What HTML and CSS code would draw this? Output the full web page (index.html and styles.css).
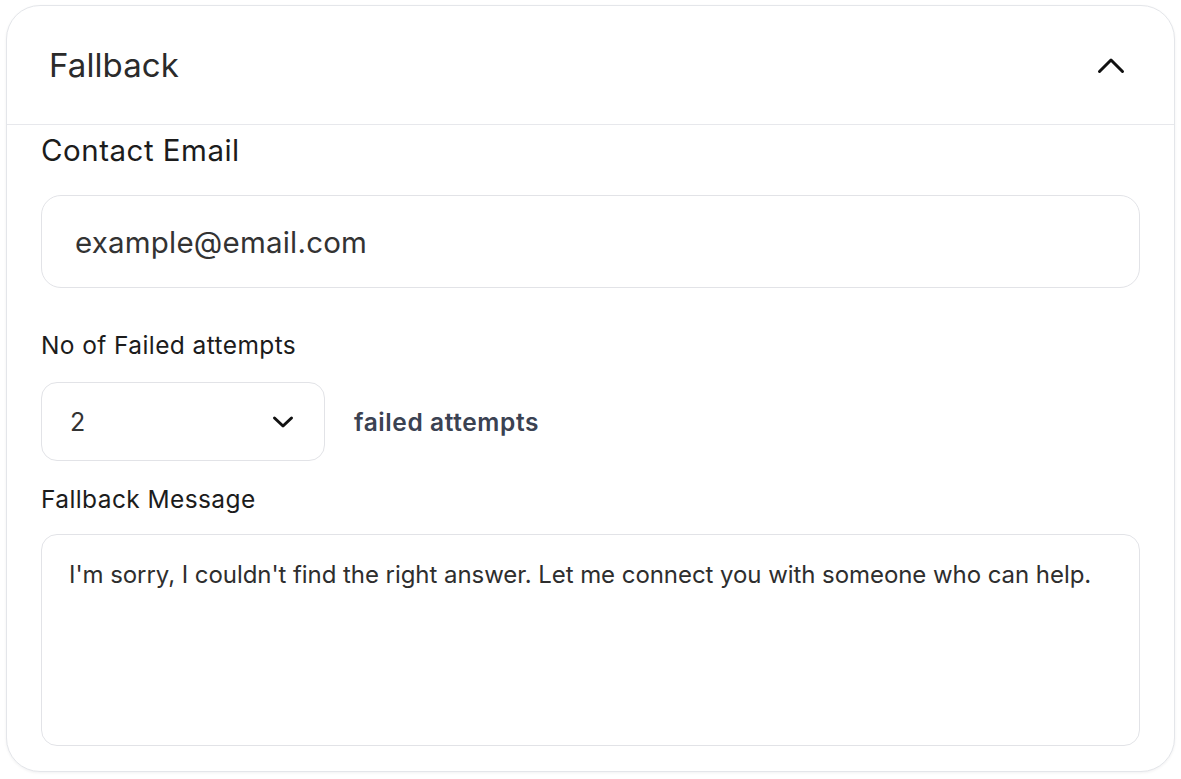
FILE: index.html
```html
<!DOCTYPE html>
<html lang="en">
<head>
<meta charset="utf-8">
<title>Fallback</title>
<link rel="stylesheet" href="styles.css">
</head>
<body>
<section class="card">
  <header class="card-header">
    <h2 class="card-title">Fallback</h2>
    <button class="toggle" type="button" aria-label="Collapse">
      <svg width="28" height="18" viewBox="0 0 28 18"><path d="M2.5 15.5 L14 4 L25.5 15.5" fill="none" stroke="#111" stroke-width="3" stroke-linecap="round" stroke-linejoin="round"/></svg>
    </button>
  </header>
  <div class="card-body">
    <label class="label-lg">Contact Email</label>
    <input class="field field-email" type="text" value="example@email.com">

    <label class="label">No of Failed attempts</label>
    <div class="attempts-row">
      <div class="select">
        <span class="select-value">2</span>
        <svg width="22" height="14" viewBox="0 0 22 14"><path d="M2.5 3 L11 11 L19.5 3" fill="none" stroke="#111" stroke-width="3" stroke-linecap="round" stroke-linejoin="round"/></svg>
      </div>
      <span class="attempts-text">failed attempts</span>
    </div>

    <label class="label">Fallback Message</label>
    <textarea class="field field-message">I'm sorry, I couldn't find the right answer. Let me connect you with someone who can help.</textarea>
  </div>
</section>
</body>
</html>
```

FILE: styles.css
```css
* { box-sizing: border-box; }
html, body { margin: 0; padding: 0; background: #ffffff; }
body {
  font-family: Inter, "Noto Sans", sans-serif;
  color: #1f1f1f;
  padding: 5px 6px 7px 6px;
}
.card {
  width: 1169px;
  height: 767px;
  border: 1.5px solid #e4e6ea;
  border-radius: 34px;
  background: #fff;
  box-shadow: 0 1px 3px rgba(15, 23, 42, 0.06);
  overflow: hidden;
  display: flex;
  flex-direction: column;
}
.card-header {
  height: 119px;
  flex: none;
  border-bottom: 1.5px solid #e7e8ec;
  display: flex;
  align-items: center;
  justify-content: space-between;
  padding: 0 49px 0 42px;
}
.card-title {
  margin: 0;
  font-size: 33px;
  font-weight: 400;
  color: #2b2b2b;
  letter-spacing: 0.1px;
}
.toggle {
  border: 0;
  background: none;
  padding: 0;
  display: flex;
  cursor: pointer;
}
.card-body {
  padding: 5px 34px 0 34px;
  display: flex;
  flex-direction: column;
}
.label-lg {
  font-size: 29.5px;
  line-height: 40px;
  color: #1c1c1c;
  letter-spacing: 0.5px;
}
.label {
  font-size: 24.5px;
  line-height: 30px;
  color: #1c1c1c;
  letter-spacing: 0.4px;
}
.field {
  display: block;
  width: 100%;
  border: 1.5px solid #e2e3e7;
  background: #fff;
  font-family: inherit;
  color: #333;
  outline: none;
}
.field-email {
  margin: 25px 0 42px;
  height: 93px;
  border-radius: 20px;
  padding: 0 33px;
  font-size: 29.5px;
  letter-spacing: 0.2px;
}
.attempts-row {
  display: flex;
  align-items: center;
  gap: 29px;
  margin: 22px 0 23px;
}
.select {
  width: 284px;
  height: 79px;
  border: 1.5px solid #e2e3e7;
  border-radius: 16px;
  display: flex;
  align-items: center;
  justify-content: space-between;
  padding: 0 30px 0 28px;
}
.select-value {
  font-size: 25px;
  color: #333;
}
.attempts-text {
  font-size: 24.5px;
  font-weight: 600;
  color: #3b4252;
  letter-spacing: 0.6px;
}
.field-message {
  margin-top: 20px;
  height: 212px;
  border-radius: 16px;
  padding: 24px 27px;
  font-size: 24px;
  line-height: 32px;
  letter-spacing: -0.06px;
  color: #2e2e2e;
  resize: none;
}
```
